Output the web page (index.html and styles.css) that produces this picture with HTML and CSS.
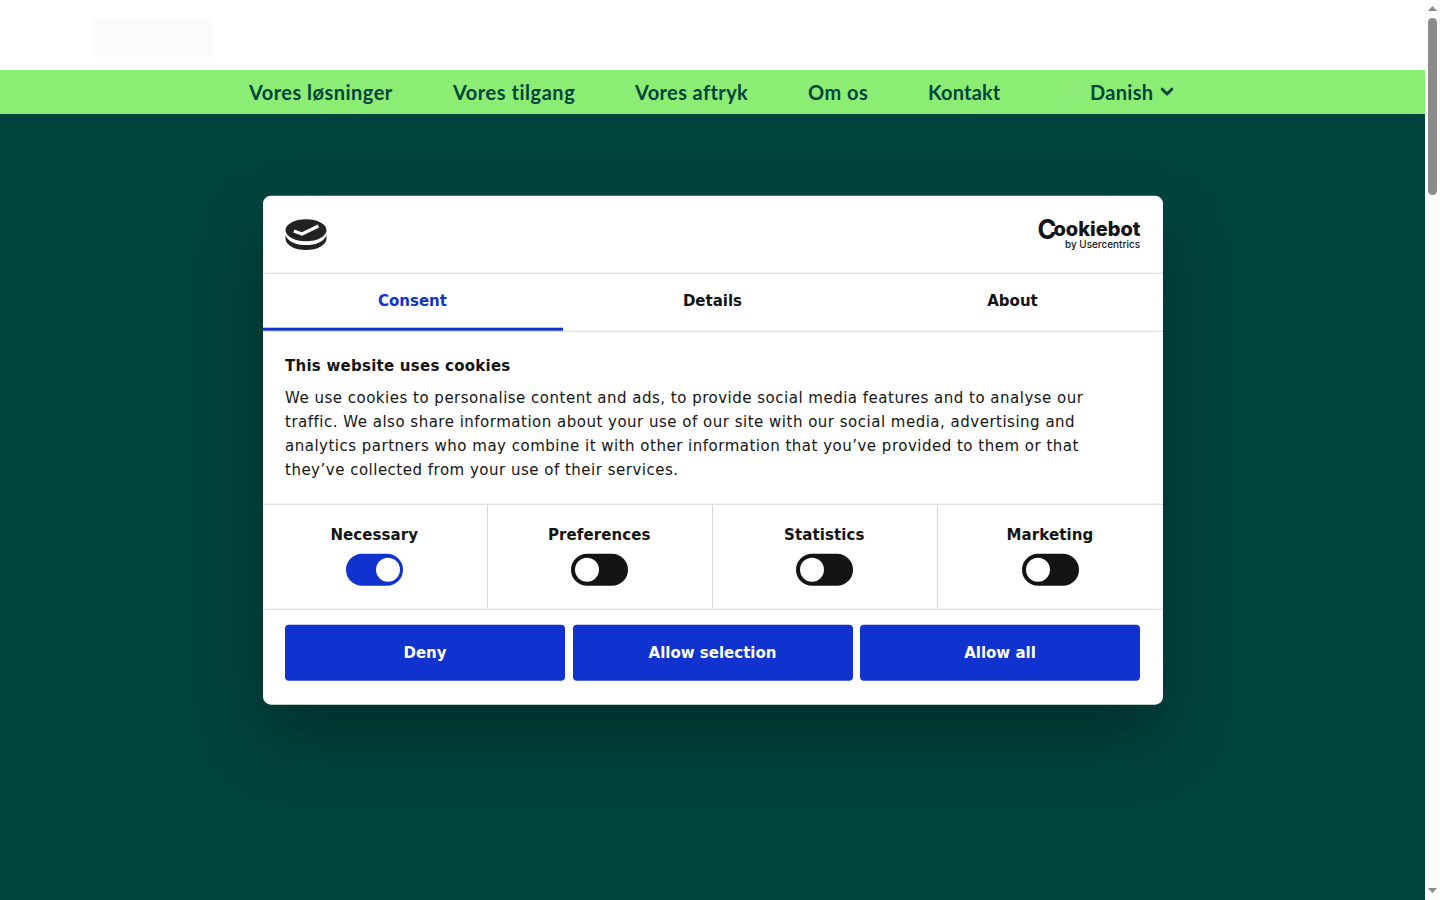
FILE: index.html
```html
<!DOCTYPE html>
<html lang="da">
<head>
  <meta charset="UTF-8">
  <meta name="viewport" content="width=device-width, initial-scale=1.0">
  <title>Forside</title>
  <link rel="stylesheet" href="styles.css">
</head>
<body>

<div class="page">
  <header class="header">
    <div class="logo-placeholder"></div>
  </header>
  <nav class="menu">
    <a class="link-solutions">Vores løsninger</a>
    <a class="link-approach">Vores tilgang</a>
    <a class="link-impact">Vores aftryk</a>
    <a class="link-about">Om os</a>
    <a class="link-contact">Kontakt</a>
    <a class="language">
      <span class="flag"></span>
      <span>Danish</span>
      <svg class="chevron" width="14" height="10" viewBox="0 0 14 10"><path d="M2.200 2.200 7 7l4.800-4.800" fill="none" stroke="currentColor" stroke-width="3" stroke-linecap="round" stroke-linejoin="round"/></svg>
    </a>
  </nav>
  <main class="hero"></main>
</div>

<div class="scrollbar">
  <svg class="arrow" width="9" height="5" viewBox="0 0 9 5"><path d="M0 5 4.500 0 9 5z" fill="#8b8b8b"/></svg>
  <div class="thumb"></div>
  <svg class="arrow arrow-down" width="9" height="5" viewBox="0 0 9 5"><path d="M0 0h9L4.500 5z" fill="#8b8b8b"/></svg>
</div>

<div class="dialog">
  <div class="dialog-header">
    <svg class="cookie-icon" width="42" height="32" viewBox="0 0 42 32">
      <ellipse cx="21" cy="11.500" rx="20.500" ry="11" fill="#222"/>
      <path d="M.5 16.500C3 22.800 11 26.400 21 26.400s18-3.600 20.500-9.900v3.300C41.500 26.500 32.300 31.300 21 31.300S.5 26.500.5 19.800z" fill="#222"/>
      <path d="M8.800 12.200 17 15.200 33.500 7.300" fill="none" stroke="#fff" stroke-width="3.200"/>
    </svg>
    <svg class="brand" width="104" height="38" viewBox="0 0 104 38">
      <text class="brand-c" x="-0.500" y="20.500" textLength="19" lengthAdjust="spacingAndGlyphs">C</text>
      <text class="brand-name" x="15.500" y="17" textLength="87" lengthAdjust="spacingAndGlyphs">ookiebot</text>
      <text class="brand-by" x="27" y="28.800" textLength="75" lengthAdjust="spacingAndGlyphs">by Usercentrics</text>
    </svg>
  </div>

  <div class="tabs">
    <div class="tab active">Consent</div>
    <div class="tab">Details</div>
    <div class="tab">About</div>
  </div>

  <div class="dialog-text">
    <h2>This website uses cookies</h2>
    <p>We use cookies to personalise content and ads, to provide social media features and to analyse our traffic. We also share information about your use of our site with our social media, advertising and analytics partners who may combine it with other information that you’ve provided to them or that they’ve collected from your use of their services.</p>
  </div>

  <div class="options">
    <div class="option"><span>Necessary</span><div class="switch on"></div></div>
    <div class="option"><span>Preferences</span><div class="switch"></div></div>
    <div class="option"><span>Statistics</span><div class="switch"></div></div>
    <div class="option"><span>Marketing</span><div class="switch"></div></div>
  </div>

  <div class="buttons">
    <button>Deny</button>
    <button>Allow selection</button>
    <button>Allow all</button>
  </div>
</div>

</body>
</html>
```
FILE: styles.css
```css
* {
  box-sizing: border-box;
}

body {
  margin: 0;
  height: 100vh;
  display: flex;
  overflow: hidden;
  font-family: "DejaVu Sans", sans-serif;
  color: #141414;
}

.page {
  flex: 1;
  display: flex;
  flex-direction: column;
}

.header {
  height: 70px;
  padding: 18px 93px;
  background: #fff;
}

.logo-placeholder {
  width: 120px;
  height: 39px;
  background: #fafcfb;
}

.menu {
  height: 44px;
  padding-left: 249px;
  display: flex;
  align-items: center;
  gap: 60px;
  background: #8ced75;
  color: #00443e;
  font-family: Lato, sans-serif;
  font-weight: bold;
  font-size: 20px;
  line-height: 44px;
  white-space: nowrap;
}

.menu a {
  letter-spacing: 0.3px;
}

.menu .link-solutions {
  width: 144px;
  letter-spacing: 0.47px;
}

.menu .link-approach {
  width: 122px;
  letter-spacing: 0.53px;
}

.menu .link-impact {
  width: 113px;
  letter-spacing: 0.38px;
}

.menu .link-about {
  width: 60px;
  letter-spacing: 0.5px;
}

.menu .link-contact {
  width: 73px;
  letter-spacing: 0.15px;
}

.language {
  display: flex;
  align-items: center;
}

.flag {
  width: 16px;
  height: 14px;
  margin: 0 9px 0 4px;
  background: #8fec7b;
}

.chevron {
  margin-left: 7px;
}

.hero {
  flex: 1;
  background: #00443e;
}

.scrollbar {
  width: 15px;
  padding: 6px 0 7px;
  display: flex;
  flex-direction: column;
  align-items: center;
  background: #fcfcfc;
}

.thumb {
  width: 9px;
  height: 177px;
  margin-top: 7px;
  border-radius: 5px;
  background: #8b8b8b;
}

.arrow-down {
  margin-top: auto;
}

.dialog {
  position: absolute;
  top: 50%;
  left: calc(50% - 7.5px);
  width: 900px;
  height: 508.6px;
  transform: translate(-50%, -50%);
  display: flex;
  flex-direction: column;
  background: #fff;
  border-radius: 8px;
  box-shadow: 0 32px 68px rgba(0, 0, 0, 0.3);
  font-size: 15px;
}

.dialog-header {
  height: 78px;
  padding: 22.5px 22px 0;
  display: flex;
  justify-content: space-between;
  border-bottom: 1px solid #d6d6d6;
}

.brand {
  margin-right: -1px;
  overflow: visible;
  fill: #141414;
}

.brand-c {
  font: bold 27.5px Inter, sans-serif;
}

.brand-name {
  font: 800 20px Inter, sans-serif;
}

.brand-by {
  font: 500 10px Inter, sans-serif;
}

.tabs {
  height: 58px;
  display: flex;
  border-bottom: 1px solid #d6d6d6;
}

.tab {
  flex: 1;
  height: 57px;
  line-height: 54px;
  text-align: center;
  font-weight: bold;
}

.tab.active {
  color: #1032cf;
  border-bottom: 3px solid #1032cf;
}

.dialog-text {
  height: 172px;
  padding: 22px 22.5px;
}

.dialog-text h2 {
  margin: 0 0 8px;
  font-size: 15px;
  line-height: 24px;
  letter-spacing: 0.25px;
}

.dialog-text p {
  margin: 0;
  width: 820px;
  line-height: 24px;
  letter-spacing: 0.5px;
}

.options {
  height: 106px;
  display: flex;
  border-top: 1px solid #d6d6d6;
  border-bottom: 1px solid #d6d6d6;
}

.option {
  width: 225px;
  padding: 18px 0.4px 0 0;
  display: flex;
  flex-direction: column;
  align-items: center;
  font-weight: bold;
  line-height: 24px;
  letter-spacing: 0.1px;
  border-right: 1px solid #d6d6d6;
}

.option:last-child {
  padding-right: 0;
  border-right: 0;
}

.switch {
  width: 57px;
  height: 32px;
  margin-top: 7px;
  padding: 4px;
  border-radius: 16px;
  background: #141414;
}

.switch::before {
  content: "";
  display: block;
  width: 24px;
  height: 24px;
  border-radius: 50%;
  background: #fff;
}

.switch.on {
  background: #1032cf;
}

.switch.on::before {
  margin-left: 26px;
}

.buttons {
  padding: 15px 22.5px 0;
  display: flex;
  gap: 7.5px;
}

.buttons button {
  flex: 1;
  height: 56px;
  padding: 0;
  border: 0;
  border-radius: 4px;
  background: #1032cf;
  color: #fff;
  font: bold 15px "DejaVu Sans", sans-serif;
}
```
